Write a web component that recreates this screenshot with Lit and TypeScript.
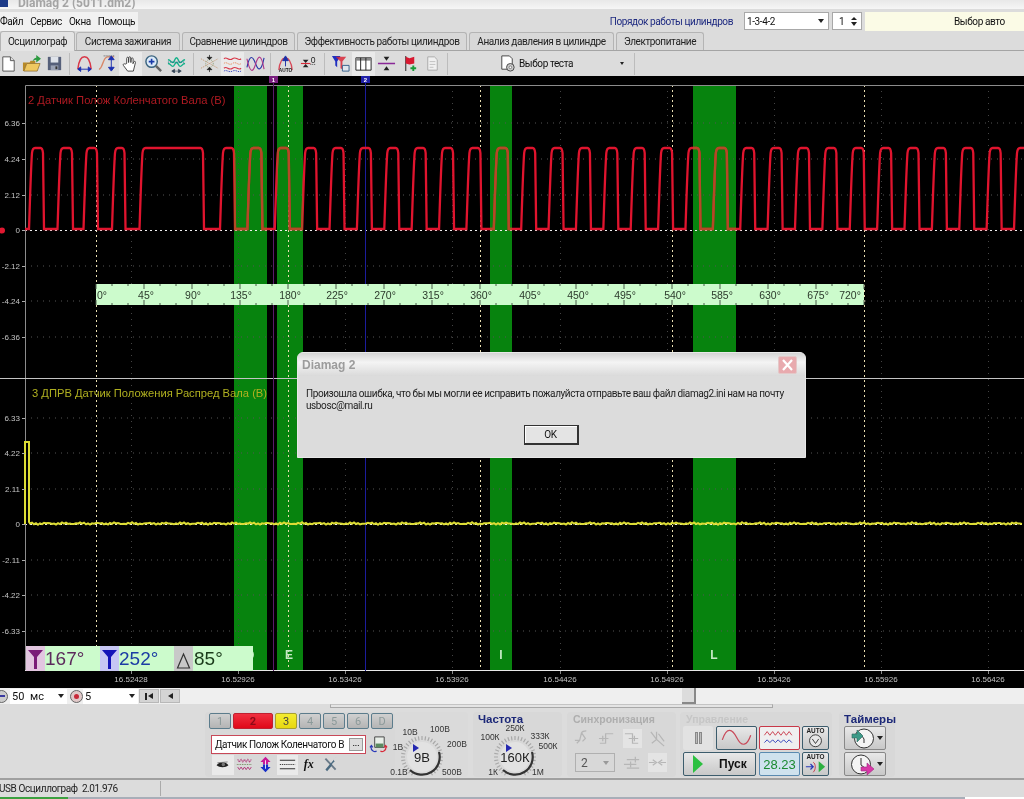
import { LitElement, html, css, svg } from 'lit'
import { customElement } from 'lit/decorators.js'

// --- plot data ---
const bands = [[234, 33], [277, 26], [490, 22], [693, 43]]
const bandLetters = [['D', 250], ['E', 289], ['I', 501], ['L', 714]]
const majorX = [96.5, 288.5, 480.5, 672.5, 864.5]
const minorX = [131, 238, 345, 452, 560, 667, 774, 881, 988]
const times = ['16.52428', '16.52926', '16.53426', '16.53926', '16.54426', '16.54926', '16.55426', '16.55926', '16.56426']
const ticks1 = [['6.36', 123], ['4.24', 159], ['2.12', 195], ['0', 230], ['-2.12', 266], ['-4.24', 301], ['-6.36', 337]]
const ticks2 = [['6.33', 418], ['4.22', 453], ['2.11', 489], ['0', 524], ['-2.11', 560], ['-4.22', 595], ['-6.33', 631]]
const degrees = [
  ['0°', 102], ['45°', 146], ['90°', 193], ['135°', 241], ['180°', 290], ['225°', 337], ['270°', 385], ['315°', 433], ['360°', 481],
  ['405°', 530], ['450°', 578], ['495°', 625], ['540°', 675], ['585°', 722], ['630°', 770], ['675°', 818], ['720°', 850]
]

function redTrace () {
  const pulses: number[][] = [[29, 44], [57.5, 73], [83.5, 98], [112, 125.5], [139.5, 204]]
  for (let k = 0; k < 30; k++) {
    const r = 220 + 27.38 * k
    pulses.push([r, r + 15])
  }
  let d = 'M25 229'
  for (const [r, f] of pulses) {
    d += `L${r} 229C${r + 1} 200 ${r + 2} 165 ${r + 3} 153Q${r + 3.5} 148 ${r + 6} 148L${f - 3.5} 148Q${f - 1.5} 148 ${f - 1} 153L${f} 229`
  }
  return d
}

function yellowTrace () {
  let d = 'M25 524L25 442L29 442L29 522'
  for (let x = 30; x < 1024; x += 2) {
    const n = Math.sin(x * 1.7) * 0.7 + Math.sin(x * 0.37) * 0.5
    d += `L${x} ${(523.5 + n).toFixed(1)}`
  }
  return d
}

function rulerTicks () {
  let d = ''
  for (let x = 96; x <= 864; x += 16) {
    const major = (x - 96) % 48 === 0
    d += `M${x} 284v${major ? 5 : 2}M${x} 305v-${major ? 5 : 2}`
  }
  return d
}

// --- toolbar icons ---
const ic = (body: unknown, cls = '') => html`<svg class="ic ${cls}" viewBox="0 0 20 20">${body}</svg>`

const icons = {
  page: svg`<path d="M4 3h8l4 4v11H4z" fill="#fff" stroke="#555"/><path d="M12 3v4h4" fill="#ddd" stroke="#555"/>`,
  open: svg`<path d="M1 9h7l1-2h5v3H5L2 18H1z" fill="#b88a28"/><path d="M5 10h14l-3 8H2z" fill="#f0c860" stroke="#86601c" stroke-width=".7"/><path d="M11 8c1-3 3-4 4-4V1l5 4-5 4V6c-2 0-3 1-4 2z" fill="#2c9a40"/>`,
  save: svg`<path d="M3 3h14v14H3z" fill="#56607a"/><path d="M6 3h8v6H6z" fill="#dfe3ea"/><path d="M6 12h8v5H6z" fill="#9aa2b4"/><path d="M11 13h2v3h-2z" fill="#333"/>`,
  arch: svg`<path d="M3 16C4 6 7 3 10 3s6 3 7 13" fill="none" stroke="#d83848" stroke-width="1.6"/><path d="M3 16h14M3 16l3-2.4v4.8zM17 16l-3-2.4v4.8z" fill="#1c30b0" stroke="#1c30b0"/>`,
  curve: svg`<path d="M1 16c4 0 4-13 9-13h7" fill="none" stroke="#d88868" stroke-width="1.5"/><path d="M6 2h12" stroke="#555" stroke-dasharray="1 1"/><path d="M14 4v12M14 2l-3 4h6zM14 18l-3-4h6z" fill="#1c30b0" stroke="#1c30b0"/>`,
  hand: svg`<path d="M6 10V4.5c0-1.5 2-1.5 2 0V9l.2-5c0-1.5 2-1.5 2 0l.2 5 .4-4c.2-1.3 2-1.2 2 .2l-.2 5 1-2c.6-1 2-.4 1.6.8L13 18H7L2.5 12c-.8-1.2.8-2.4 1.8-1.3z" fill="#fff" stroke="#333" stroke-width=".9"/>`,
  zoom: svg`<circle cx="8" cy="8" r="6" fill="#dceaf8" stroke="#38627e" stroke-width="1.5"/><path d="M5 8h6M8 5v6" stroke="#1a3aa8" stroke-width="1.7"/><path d="M12.5 12.5L18 18" stroke="#666" stroke-width="2.6"/>`,
  teal: svg`<path d="M1 6c3 0 3 3 5 3s2-5 4-5 2 5 4 5 2-3 5-3" fill="none" stroke="#10b088" stroke-width="1.5"/><path d="M1 10c3 0 3 3 5 3s2-4 4-4 2 4 4 4 2-3 5-3" fill="none" stroke="#10b088" stroke-width="1.5"/><path d="M1 8.5h18" stroke="#206080" stroke-dasharray="1 1"/><path d="M6 18h8M5 18l3-2v4zM15 18l-3-2v4z" fill="#345" stroke="#345" stroke-width=".7"/>`,
  cross: svg`<path d="M1 5l18 10M1 15l18-10" stroke="#c8a080" stroke-dasharray="1.5 1"/><circle cx="10" cy="10" r="4" fill="none" stroke="#8a9a70" stroke-dasharray="1 1"/><path d="M10 1v4M7.5 3.5L10 6l2.5-2.5zM10 19v-4M7.5 16.5L10 14l2.5 2.5z" stroke="#222" fill="#222" stroke-width=".8"/>`,
  waves: svg`<path d="M1 5c3-3 5 3 9 0s6 3 9 0" fill="none" stroke="#d83848" stroke-width="1.2"/><path d="M1 10c3-3 5 3 9 0s6 3 9 0" fill="none" stroke="#e88858" stroke-dasharray="1.5 1"/><path d="M1 15c3-3 5 3 9 0s6 3 9 0" fill="none" stroke="#d83848" stroke-width="1.2"/><path d="M1 18c3-2 5 2 9 0s6 2 9 0" fill="none" stroke="#3848c0" stroke-dasharray="1.5 1"/>`,
  mix: svg`<path d="M1 14C4 0 7 2 10 10s6 9 9-6" fill="none" stroke="#2838a8" stroke-width="1.2"/><path d="M1 5c3 14 6 16 9 6s6-12 9 5" fill="none" stroke="#b03888" stroke-width="1.2"/>`,
  autoArch: svg`<path d="M3 17C4 7 7 4 10 4s6 3 7 13" fill="none" stroke="#d84858" stroke-width="1.4"/><path d="M10 13V5M7 7l3-5 3 5z" fill="#1c30a8" stroke="#1c30a8"/><text x="10" y="19" class="micro" text-anchor="middle">AUTO</text>`,
  zero: svg`<path d="M2 10h10" stroke="#d82838" stroke-width="1.2"/><path d="M4 6h6l-3 3.4zM4 14h6l-3-3.4z" fill="#222"/><text x="15" y="9" class="small" text-anchor="middle">0</text><path d="M12 11h6" stroke="#444" stroke-dasharray="1 1"/>`,
  funnel: svg`<path d="M1 2h9L6.5 8v6L4.5 12V8z" fill="#2030c0"/><path d="M5 3h11l-4 5v8l-2-1V8z" fill="#d82838" opacity=".85"/><path d="M12 12h7v6h-7z" fill="#dfe6ee" stroke="#35608a"/>`,
  table: svg`<path d="M2 4h16v13H2z" fill="#fff" stroke="#222"/><path d="M2 4h16v3H2z" fill="#888"/><path d="M7 4v13M12.5 4v13" stroke="#222"/>`,
  divide: svg`<path d="M1 10h18" stroke="#8a2898" stroke-width="1.6"/><path d="M7 3h6l-3 4zM7 17h6l-3-4z" fill="#222"/>`,
  flag: svg`<path d="M6 2v16" stroke="#555" stroke-width="1.4"/><path d="M6 3l4 1.5L15 3v7l-5 1-4-1z" fill="#d81830"/><path d="M14 12v6M11 15h6" stroke="#189a38" stroke-width="2"/>`,
  faint: svg`<path d="M5 3h7l3 3v11H5z" fill="#f0f0f0" stroke="#aaa"/><path d="M7 8h6M7 11h6M7 14h4" stroke="#c0c0c0"/>`,
  gearPage: svg`<path d="M4 2h8l3 3v11H4z" fill="#fff" stroke="#444"/><circle cx="13" cy="14" r="4" fill="#ccc" stroke="#444"/><circle cx="13" cy="14" r="1.4" fill="#fff" stroke="#444" stroke-width=".6"/>`,
  channelSwap: svg`<path d="M6 2h10v11H6z" fill="#e8eee8" stroke="#444"/><path d="M7 9h8v4H7z" fill="#5a8a60"/><path d="M2 12c0 5 4 6 6 5M1 13l1.5-2 1.5 2" fill="none" stroke="#2838b8" stroke-width="1.3"/><path d="M18 12c0 5-4 6-6 5M19 13l-1.5-2-1.5 2" fill="none" stroke="#d82838" stroke-width="1.3"/>`,
  eye: svg`<path d="M3 11c3-5 11-5 14 0-3 3-11 3-14 0z" fill="#222"/><circle cx="11" cy="10" r="2" fill="#777"/><path d="M4 8l12-1" stroke="#777"/>`,
  wave: svg`<path d="M2 4l2 3 2-3 2 3 2-3 2 3 2-3 2 3 2-3" fill="none" stroke="#b03878" stroke-dasharray="1.5 .6" stroke-width="1.2"/><path d="M1 10h18" stroke="#5a7a40" stroke-dasharray="1 1"/><path d="M2 13l2 3 2-3 2 3 2-3 2 3 2-3 2 3 2-3" fill="none" stroke="#b03878" stroke-width="1.1"/>`,
  updown: svg`<path d="M10 1l6 6h-3v3H7V7H4z" fill="#c81898"/><path d="M10 19l6-6h-3v-3H7v3H4z" fill="#1830c8"/><path d="M10 5v10" stroke="#fff"/>`,
  lines: svg`<path d="M1 5h18M1 15h18" stroke="#222" stroke-width="1.1"/><path d="M1 10h18" stroke="#222" stroke-dasharray="1.5 1"/>`,
  tools: svg`<path d="M4 3l12 13" stroke="#6a7a88" stroke-width="2.2"/><path d="M16 2l-5 6-2 2-5 6 2 2 5-6 1-3 5-5z" fill="#4a6a80"/><circle cx="16" cy="4" r="2.2" fill="#d8d8d8"/>`
}

function disabledIcon (d: string) {
  return html`<svg class="ic" viewBox="0 0 20 20"><path d=${d} fill="none" stroke="#b6b6b6" stroke-width="1.3"/></svg>`
}

// knob drawn on its own little canvas; labels are real text
function knob (w: number, h: number, cx: number, cy: number, value: string, labels: [string, number, number][]) {
  const minor: string[] = []
  for (let a = 120; a <= 420; a += 10) {
    const rad = a * Math.PI / 180
    const c = Math.cos(rad)
    const s = Math.sin(rad)
    minor.push(`M${(cx + c * 17).toFixed(1)} ${(cy + s * 17).toFixed(1)}L${(cx + c * 21).toFixed(1)} ${(cy + s * 21).toFixed(1)}`)
  }
  return html`<svg class="knob" width=${w} height=${h} viewBox="0 0 ${w} ${h}">
    <path d=${minor.join('')} stroke="#a8a8a8" stroke-width="1.2"/>
    <circle cx=${cx} cy=${cy} r="15" fill="#e2e2e2"/>
    <path d="M${cx - 12} ${cy + 13}A17.700 17.700 0 0 0 ${cx + 17} ${cy - 5}" fill="none" stroke="#333" stroke-width="2.2"/>
    <path d="M${cx - 9} ${cy - 13}l6 4-6 4z" fill="#2428b0"/>
    <text x=${cx} y=${cy + 5} class="knob-val">${value}</text>
    ${labels.map(([t, x, y]) => svg`<text x=${x} y=${y} class="knob-lab">${t}</text>`)}
  </svg>`
}

const tabs = [
  ['Осциллограф', 'active t1'], ['Система зажигания', 't2'], ['Сравнение цилиндров', 't3'],
  ['Эффективность работы цилиндров', 't4'], ['Анализ давления в цилиндре', 't5'], ['Электропитание', 't6']
]

const channels = [
  ['1', 'w1'], ['2', 'w2 red'], ['3', 'w1 yellow'], ['4', 'w1'], ['5', 'w1'], ['6', 'w1'], ['D', 'w1']
]

@customElement('app-root')
export class AppRoot extends LitElement {
  static styles = css`
    * { box-sizing: border-box; }

    :host {
      display: block;
      width: 1024px;
      height: 799px;
      overflow: hidden;
      background: #dcdcdc;
      color: #111;
      font-family: Roboto, "Liberation Sans", sans-serif;
      font-size: 10px;
      filter: blur(.35px);
    }

    /* the reference's interface text is narrow for its height */
    .menu, .order, .combo, .pick, .tab, .test, .d-body, .name, .status span, .ok { letter-spacing: -.4px; }

    .title {
      display: flex;
      align-items: flex-end;
      height: 9px;
      overflow: hidden;
      background: linear-gradient(#e8e8e8, #f6f6f6);
      padding-left: 18px;
      position: relative;
    }
    .title span { font-size: 12px; font-weight: bold; color: #a4a4a4; line-height: 13px; margin-bottom: -1px; flex: none; }
    .title i { position: absolute; left: 0; top: 0; width: 8px; height: 7px; background: #1c3a88; }

    .menu-row {
      display: flex;
      align-items: center;
      height: 23px;
      padding-top: 1px;
    }
    .menu {
      display: flex;
      gap: 7px;
      width: 138px;
      height: 19px;
      align-items: center;
      background: #f1f1f1;
      white-space: nowrap;
    }
    .menu-row .order { margin-left: auto; color: #1e2a80; margin-right: 11px; }
    .combo {
      display: flex;
      align-items: center;
      justify-content: space-between;
      height: 18px;
      padding: 0 4px 0 2px;
      background: #fff;
      border: 1px solid #a8a8a8;
    }
    .arrow { width: 0; height: 0; border: 3px solid transparent; border-top: 4px solid #222; border-bottom: 0; }
    .order-sel { width: 85px; margin-right: 3px; }
    .spin { width: 30px; margin-right: 3px; padding-left: 6px; }
    .spin em { display: flex; flex-direction: column; gap: 2px; }
    .up { width: 0; height: 0; border: 3px solid transparent; border-bottom: 3px solid #222; border-top: 0; }
    .pick {
      width: 159px;
      height: 19px;
      background: #fbfbe6;
      display: flex;
      align-items: center;
      padding-left: 89px;
      white-space: nowrap;
    }

    .tabs {
      display: flex;
      align-items: flex-end;
      gap: 2px;
      height: 19px;
      border-bottom: 1px solid #a4a4a4;
    }
    .tab {
      height: 18px;
      display: flex;
      align-items: center;
      justify-content: center;
      border: 1px solid #b4b4b4;
      border-bottom: 0;
      border-radius: 3px 3px 0 0;
      background: #d8d8d8;
      white-space: nowrap;
      color: #222;
    }
    .tab.active { height: 20px; margin-bottom: -1px; background: #e4e4e4; margin-right: -1px; }
    .t1 { width: 75px; }
    .t2 { width: 104px; }
    .t3 { width: 113px; }
    .t4 { width: 170px; }
    .t5 { width: 145px; }
    .t6 { width: 88px; }

    .toolbar {
      display: flex;
      align-items: center;
      height: 25px;
      margin-left: -3px;
    }
    .tb { width: 23px; height: 24px; display: flex; align-items: center; justify-content: center; flex: none; }
    .tb.on { background: #eaeaea; }
    .ic { width: 19px; height: 19px; display: block; }
    .sep { display: flex; justify-content: center; flex: none; height: 22px; }
    .sep::after { content: ''; width: 1px; background: #bcbcbc; }
    .s6 { width: 7px; }
    .s9 { width: 9px; }
    .s10 { width: 10px; }
    .micro { font-size: 5px; font-weight: bold; fill: #222; font-family: "Liberation Sans", sans-serif; }
    .small { font-size: 9px; fill: #222; font-family: "Liberation Sans", sans-serif; }
    .test {
      display: flex;
      align-items: center;
      gap: 2px;
      width: 133px;
      margin-left: 47px;
      white-space: nowrap;
    }
    .test .arrow { margin-left: auto; margin-right: 7px; border-width: 2px; border-top-width: 3px; }

    .plot { position: relative; height: 612px; background: #000; }
    .plot > svg { display: block; }
    .plot text { font-family: "Liberation Sans", sans-serif; }
    .t-tick { font-size: 8px; fill: #c4c4c4; }
    .deg { font-size: 10.5px; fill: #2c3a2c; }
    .ch1 { font-size: 11.2px; fill: #b01a22; }
    .ch2 { font-size: 11.2px; fill: #b0b020; }
    .letter { font-size: 12px; font-weight: bold; fill: #c4eac4; text-anchor: middle; }
    .badge { font-size: 6px; font-weight: bold; fill: #fff; text-anchor: middle; }

    .angles {
      position: absolute;
      left: 26px;
      top: 570px;
      width: 227px;
      height: 25px;
      display: flex;
      background: #ccfbcc;
      font-family: "Liberation Sans", sans-serif;
      font-size: 19px;
      line-height: 25px;
    }
    .angles .mark { width: 19px; height: 25px; display: flex; align-items: center; justify-content: center; flex: none; }
    .angles span { display: block; flex: none; }
    .m1 { background: #e2c6e0; }
    .m2 { background: #c6c6f4; margin-left: 17px; }
    .m3 { background: #c8c8c8; margin-left: 17px; }
    .v1 { color: #5c2a5c; width: 38px; }
    .v2 { color: #1c3ca4; width: 38px; }
    .v3 { color: #1a3a1a; padding-left: 1px; }

    .dialog {
      position: absolute;
      left: 297px;
      top: 276px;
      width: 509px;
      height: 106px;
      background: #dcdcdc;
      border: 1px solid #e8e8e8;
      border-radius: 6px 6px 0 0;
      display: flex;
      flex-direction: column;
    }
    .d-head {
      height: 23px;
      flex: none;
      display: flex;
      align-items: center;
      justify-content: space-between;
      padding: 0 8px 0 4px;
      background: linear-gradient(#d4d4d4, #f4f4f4 40%, #dadada);
      border-radius: 6px 6px 0 0;
      font-family: "Liberation Sans", sans-serif;
      font-size: 12px;
      font-weight: bold;
      color: #9c9c9c;
    }
    .close {
      width: 19px;
      height: 18px;
      background: #e8aaae;
      border: 1px solid #e4c8c8;
      border-radius: 2px;
      display: flex;
    }
    .close svg { width: 100%; height: 100%; }
    .d-body { padding: 12px 8px 0; line-height: 12px; color: #222; white-space: nowrap; }
    .d-foot { display: flex; justify-content: center; margin-top: 13px; padding-right: 1px; }
    .ok {
      width: 55px;
      height: 20px;
      border: 1px solid #333;
      border-width: 1px 2px 2px 1px;
      background: #e4e4e4;
      display: flex;
      align-items: center;
      justify-content: center;
      box-shadow: inset 1px 1px 0 #fff;
    }

    .nav {
      display: flex;
      align-items: center;
      height: 16px;
      background: #efefef;
      position: relative;
    }
    .round { width: 13px; height: 13px; border-radius: 50%; border: 1px solid #666; background: #ccc; display: flex; align-items: center; justify-content: center; flex: none; }
    .round b { width: 7px; height: 2px; background: #3a3aa0; }
    .round.plus { margin-left: 3px; background: #e0c8c8; }
    .round.plus b { width: 5px; height: 5px; border-radius: 50%; background: #c82838; }
    .minus { margin-left: -5px; margin-right: 2px; }
    .nav-sel { display: flex; align-items: center; justify-content: space-between; height: 15px; background: #fff; padding: 0 3px 0 2px; font-size: 11px; }
    .w58 { width: 57px; word-spacing: 3px; }
    .w55 { width: 55px; }
    .step { height: 14px; width: 20px; background: #d4d4d4; border: 1px solid #b8b8b8; margin-left: 1px; display: flex; align-items: center; justify-content: center; gap: 1px; flex: none; }
    .step u { width: 2px; height: 7px; background: #222; }
    .step s { width: 0; height: 0; border: 3.5px solid transparent; border-right: 5px solid #222; border-left: 0; }
    .thumb { position: absolute; left: 682px; top: 0; width: 14px; height: 16px; background: #dcdcdc; border-right: 2px solid #888; border-bottom: 2px solid #888; }

    .hbar { height: 4px; margin: 0 251px 0 330px; background: #e4e4e4; border: 1px solid #a8a8a8; border-top: 1px solid #c4c4c4; }

    .panel {
      display: flex;
      height: 72px;
      padding: 4px 0 0 205px;
      gap: 5px;
      border-bottom: 2px solid #a0a0a0;
    }
    .grp { background: #d8d8d8; border-radius: 4px; height: 65px; flex: none; position: relative; }
    .g-ch { width: 190px; padding: 1px 0 0 4px; display: flex; flex-direction: column; }
    .g-kn { width: 73px; margin-left: -5px; background: #dadada; }
    .g-fr { width: 89px; }
    .g-sy { width: 109px; }
    .g-co { width: 152px; margin-left: -1px; }
    .g-ti { width: 56px; margin-left: 2px; }

    .ch-row { display: flex; gap: 2px; height: 16px; }
    .cb {
      height: 16px;
      display: flex;
      align-items: center;
      justify-content: center;
      border: 1px solid #5c7c8c;
      border-radius: 2px;
      background: linear-gradient(#d0d0d0, #b4b4b4);
      color: #8c9a9a;
      font-size: 11px;
    }
    .w1 { width: 22px; }
    .w2 { width: 40px; }
    .red { background: linear-gradient(#f03040, #e00818); border-color: #c02030; color: #8c0a18; font-weight: bold; }
    .yellow { background: linear-gradient(#f4ec30, #e8d810); border-color: #a8a030; color: #444; }
    .name-row { display: flex; align-items: center; gap: 3px; margin: 6px 0 0 2px; height: 19px; }
    .name {
      width: 155px;
      height: 19px;
      border: 1px solid #c84858;
      background: #fff;
      display: flex;
      align-items: center;
      justify-content: space-between;
      padding: 0 2px 0 3px;
      white-space: nowrap;
    }
    .dots { width: 14px; height: 13px; background: #dcdcdc; border: 1px solid #999; font-size: 8px; line-height: 9px; text-align: center; font-weight: bold; letter-spacing: 0; }
    .ch-tools { display: flex; align-items: center; height: 21px; margin-left: 3px; }
    .ch-tools .tb { width: 21.5px; height: 20px; }
    .ch-tools .ic { width: 17px; height: 17px; }
    .fx { font: italic bold 12px "Liberation Serif", serif; }

    .knob { display: block; overflow: visible; }
    .knob text { font-family: "Liberation Sans", sans-serif; }
    .knob-lab { font-size: 8.5px; fill: #333; text-anchor: middle; }
    .knob-val { font-size: 13px; fill: #222; text-anchor: middle; }

    .g-title { font-family: "Liberation Sans", sans-serif; font-weight: bold; font-size: 11.5px; line-height: 14px; padding-left: 5px; color: #1c2878; white-space: nowrap; }
    .g-title.off { color: #aeaeae; font-size: 10.5px; padding-left: 6px; }
    .g-title.fade { color: #c6c6c6; font-size: 10.5px; padding-left: 6px; }
    .sy-grid { display: grid; grid-template-columns: repeat(4, 25px); gap: 5px 0; padding: 3px 0 0 3px; justify-items: center; align-items: center; }
    .sy-sel { grid-column: span 2; justify-self: start; margin-left: 5px; width: 40px; height: 19px; border: 1px solid #b0b0b0; display: flex; align-items: center; justify-content: space-between; padding: 0 5px; color: #555; font-size: 12px; }
    .sy-sel .arrow { border-top-color: #999; }
    .lit { background: #e4e4e4; }

    .co-grid { display: flex; flex-direction: column; gap: 2px; padding: 0 0 0 3px; margin-top: 0; }
    .co-row { display: flex; gap: 2px; height: 24px; }
    .btn {
      display: flex;
      align-items: center;
      justify-content: center;
      height: 24px;
      flex: none;
      border: 1px solid #3c5c6c;
      border-radius: 2px;
      background: linear-gradient(#e8e8e8, #c8c8c8);
    }
    .pause { width: 30px; border: 0; background: #e2e2e2; gap: 1px; margin-right: 1px; }
    .pause b { width: 3px; height: 12px; border: 1px solid #888; background: #bbb; }
    .b41 { width: 41px; }
    .b27 { width: 27px; }
    .b41.redline { border-color: #c83848; background: #efefef; }
    .start { width: 73px; gap: 0; justify-content: flex-start; padding-left: 8px; font-family: "Liberation Sans", sans-serif; font-weight: bold; font-size: 12px; margin-right: 1px; }
    .start svg { width: 12px; height: 18px; margin-right: 15px; }
    .readout { color: #1a8a30; font-family: "Liberation Sans", sans-serif; font-size: 13px; background: #cfe2ee; border-color: #5a8ab0; }
    .btn svg.big { width: 100%; height: 100%; }

    .t-btn { width: 42px; height: 24px; margin: 0 0 2px 5px; gap: 2px; border-color: #888; padding-left: 2px; }
    .t-btn svg { width: 25px; height: 21px; }
    .t-btn .arrow { border-width: 3px; border-top-width: 4px; }
    .g-ti .g-title { padding-left: 5px; margin-bottom: 0; }

    .status {
      height: 17px;
      display: flex;
      align-items: center;
      white-space: nowrap;
      color: #222;
    }
    .status span { width: 162px; flex: none; border-right: 1px solid #aaa; height: 15px; line-height: 15px; margin-left: -1px; }
    .foot { display: flex; height: 2px; background: #a8aeb8; position: relative; }
    .foot i { width: 68px; background: #3ca040; }
    .foot b { margin-left: auto; width: 59px; background: #fff; }
  `

  plot () {
    const trace = redTrace()
    return html`<svg width="1024" height="612" viewBox="0 76 1024 612">
      <defs>
        <clipPath id="on-band">${bands.map(([x, w]) => svg`<rect x=${x} y="85" width=${w} height="586"/>`)}</clipPath>
      </defs>
      ${bands.map(([x, w]) => svg`<rect x=${x} y="85" width=${w} height="586" fill="#07830e"/>`)}

      <!-- grid -->
      ${[...ticks1, ...ticks2].filter(t => t[0] !== '0').map(t => svg`<path d="M25 ${t[1]}H1024" stroke="#555" stroke-dasharray="1 5"/>`)}
      ${minorX.map(x => svg`<path d="M${x}.5 85V671" stroke="#444" stroke-dasharray="1 5"/>`)}
      ${majorX.map(x => svg`<path d="M${x} 85V671" stroke="#e8dcb0" stroke-dasharray="2 3"/>`)}
      <path d="M25 230.5H1024M25 524.5H1024" stroke="#f0f0f0" stroke-dasharray="2 3"/>

      <!-- frame -->
      <path d="M25.5 671V85.5H1024" fill="none" stroke="#8c8c8c"/>
      <path d="M0 378.5H1024" stroke="#c4c4c4"/>
      <path d="M25 670.5H1024" stroke="#e8e8e8"/>

      <!-- cursors -->
      <path d="M273.5 82V671" stroke="#5a1c6a"/>
      <path d="M365.5 82V671" stroke="#1c1c9c"/>
      <rect x="269" y="76" width="9" height="7" fill="#7a2080"/>
      <text x="273.5" y="82" class="badge">1</text>
      <rect x="361" y="76" width="9" height="7" fill="#2020a8"/>
      <text x="365.5" y="82" class="badge">2</text>

      <!-- traces -->
      <path d=${trace} fill="none" stroke="#e0142e" stroke-width="2.3"/>
      <path d=${trace} fill="none" stroke="#b44a26" stroke-width="2.3" clip-path="url(#on-band)"/>
      <path d=${yellowTrace()} fill="none" stroke="#dcdc34" stroke-width="2"/>

      <text x="28" y="104" class="ch1">2 Датчик Полож Коленчатого Вала (В)</text>
      <text x="32" y="397" class="ch2">3 ДПРВ Датчик Положения Распред Вала (В)</text>

      ${bandLetters.map(([t, x]) => svg`<text x=${x} y="659" class="letter">${t}</text>`)}

      <!-- value scales -->
      ${[...ticks1, ...ticks2].map(t => svg`
        <text x="20" y=${Number(t[1]) + 3} class="t-tick" text-anchor="end">${t[0]}</text>
        <path d="M22 ${t[1]}.5H25" stroke="#aaa"/>`)}
      <circle cx="2" cy="230.5" r="3" fill="#e01830"/>

      <!-- time scale -->
      ${times.map((t, i) => svg`
        <path d="M${minorX[i]}.5 671v3" stroke="#888"/>
        <text x=${minorX[i]} y="682" class="t-tick" text-anchor="middle">${t}</text>`)}

      <!-- degree ruler -->
      <rect x="96" y="284" width="768" height="21" fill="#ccfbcc"/>
      <path d=${rulerTicks()} stroke="#4a5a4a"/>
      ${degrees.map(([t, x]) => svg`<text x=${x} y="299" class="deg" text-anchor="middle">${t}</text>`)}
    </svg>`
  }

  angles () {
    return html`<div class="angles">
      <div class="mark m1"><svg width="15" height="22" viewBox="0 0 15 22"><path d="M0 2h15L9 9v12H6V9z" fill="#7a1c78"/></svg></div>
      <span class="v1">167°</span>
      <div class="mark m2"><svg width="15" height="22" viewBox="0 0 15 22"><path d="M0 2h15L9 9v12H6V9z" fill="#1414b8"/></svg></div>
      <span class="v2">252°</span>
      <div class="mark m3"><svg width="15" height="22" viewBox="0 0 15 22"><path d="M1.5 20L7.5 6l6 14z" fill="none" stroke="#333" stroke-width="1.2"/></svg></div>
      <span class="v3">85°</span>
    </div>`
  }

  dialog () {
    return html`<div class="dialog">
      <div class="d-head">
        <span>Diamag 2</span>
        <div class="close"><svg viewBox="0 0 17 16"><path d="M4 3l9 10M13 3L4 13" stroke="#fff" stroke-width="2.2"/></svg></div>
      </div>
      <div class="d-body">Произошла ошибка, что бы мы могли ее исправить пожалуйста отправьте ваш файл diamag2.ini нам на почту<br>usbosc@mail.ru</div>
      <div class="d-foot"><div class="ok">OK</div></div>
    </div>`
  }

  channelGroup () {
    return html`<div class="grp g-ch">
      <div class="ch-row">${channels.map(([t, c]) => html`<div class="cb ${c}">${t}</div>`)}</div>
      <div class="name-row">
        <div class="name">Датчик Полож Коленчатого В<div class="dots">...</div></div>
        ${ic(icons.channelSwap)}
      </div>
      <div class="ch-tools">
        <div class="tb on">${ic(icons.eye)}</div>
        <div class="tb">${ic(icons.wave)}</div>
        <div class="tb">${ic(icons.updown)}</div>
        <div class="tb on">${ic(icons.lines)}</div>
        <div class="tb fx">fx</div>
        <div class="tb">${ic(icons.tools)}</div>
      </div>
    </div>`
  }

  syncGroup () {
    return html`<div class="grp g-sy">
      <div class="g-title off">Синхронизация</div>
      <div class="sy-grid">
        <div>${disabledIcon('M2 12h5M4 15l3-3 2-8q1-2 5-2M9 4l4 6-3 3')}</div>
        <div>${disabledIcon('M2 15h6V5h8M1 10h10M5 7v6')}</div>
        <div class="lit">${disabledIcon('M2 5h8v10h6M6 10h10M12 7v6')}</div>
        <div>${disabledIcon('M3 3l6 8 8 7M9 3v8l-5 4M11 5l6 8')}</div>
        <div class="sy-sel">2<i class="arrow"></i></div>
        <div>${disabledIcon('M4 7h13M1 12h13M4 16h13M13 4v6M8 9v6')}</div>
        <div class="lit">${disabledIcon('M1 10h6M19 10h-6M5 7l4 3-4 3M15 7l-4 3 4 3')}</div>
      </div>
    </div>`
  }

  controlGroup () {
    return html`<div class="grp g-co">
      <div class="g-title fade">Управление</div>
      <div class="co-grid">
        <div class="co-row">
          <div class="btn pause"><b></b><b></b></div>
          <div class="btn b41"><svg class="big" viewBox="0 0 41 24"><path d="M5 14C10-1 16 2 21 12s11 9 15-3" fill="none" stroke="#c84858" stroke-width="1.3"/></svg></div>
          <div class="btn b41 redline"><svg class="big" viewBox="0 0 41 24"><path d="M4 9l3-4 3 4 3-4 3 4 3-4 3 4 3-4 3 4 3-4 3 4" fill="none" stroke="#c83848"/><path d="M4 17l3-3 3 3 3-3 3 3 3-3 3 3 3-3 3 3 3-3 3 3" fill="none" stroke="#2838b8"/></svg></div>
          <div class="btn b27"><svg class="big" viewBox="0 0 27 24"><text x="13.5" y="7" class="small" text-anchor="middle" style="font-size:7px;font-weight:bold">AUTO</text><circle cx="13.5" cy="15" r="6.5" fill="#e8e8e8" stroke="#333"/><path d="M10 13l3.5 5 3.5-5" fill="none" stroke="#333"/></svg></div>
        </div>
        <div class="co-row">
          <div class="btn start"><svg viewBox="0 0 12 18"><path d="M1 0l10 9-10 9z" fill="#2cc040"/></svg>Пуск</div>
          <div class="btn b41 readout">28.23</div>
          <div class="btn b27"><svg class="big" viewBox="0 0 27 24"><text x="13.5" y="7" class="small" text-anchor="middle" style="font-size:7px;font-weight:bold">AUTO</text><path d="M17 9l7 6-7 6z" fill="#2cb040"/><path d="M3 15h8M8 12l3 3-3 3" fill="none" stroke="#2838b8" stroke-width="1.3"/><path d="M11 10c3 2 3 8 0 11" fill="none" stroke="#c83848"/></svg></div>
        </div>
      </div>
    </div>`
  }

  timerGroup () {
    return html`<div class="grp g-ti">
      <div class="g-title">Таймеры</div>
      <div class="btn t-btn"><svg viewBox="0 0 25 21"><circle cx="14" cy="10.5" r="9.5" fill="#f4f4f4" stroke="#333"/><path d="M14 11L10 5M14 11v4" stroke="#333"/><path d="M2 6h5V2l6 6-6 6v-4H2z" fill="#3c9a88" stroke="#2c6a60" stroke-width=".6"/></svg><i class="arrow"></i></div>
      <div class="btn t-btn"><svg viewBox="0 0 25 21"><circle cx="11" cy="10.5" r="9.5" fill="#f4f4f4" stroke="#333"/><path d="M11 11V4M11 11l4 3" stroke="#333"/><path d="M11 13h6V9l7 6-7 6v-4h-6z" fill="#d838a8" stroke="#a02880" stroke-width=".6"/></svg><i class="arrow"></i></div>
    </div>`
  }

  render () {
    return html`
      <div class="title"><i></i><span>Diamag 2 (5011.dm2)</span></div>
      <div class="menu-row">
        <div class="menu"><span>Файл</span><span>Сервис</span><span>Окна</span><span>Помощь</span></div>
        <span class="order">Порядок работы цилиндров</span>
        <div class="combo order-sel">1-3-4-2<i class="arrow"></i></div>
        <div class="combo spin">1<em><i class="up"></i><i class="arrow"></i></em></div>
        <div class="pick">Выбор авто</div>
      </div>
      <div class="tabs">${tabs.map(([t, c]) => html`<div class="tab ${c}">${t}</div>`)}</div>
      <div class="toolbar">
        <div class="tb">${ic(icons.page)}</div>
        <div class="tb">${ic(icons.open)}</div>
        <div class="tb">${ic(icons.save)}</div>
        <div class="sep s6"></div>
        <div class="tb">${ic(icons.arch)}</div>
        <div class="tb">${ic(icons.curve)}</div>
        <div class="tb on">${ic(icons.hand)}</div>
        <div class="tb">${ic(icons.zoom)}</div>
        <div class="tb">${ic(icons.teal)}</div>
        <div class="sep s10"></div>
        <div class="tb">${ic(icons.cross)}</div>
        <div class="tb on">${ic(icons.waves)}</div>
        <div class="tb">${ic(icons.mix)}</div>
        <div class="sep s6"></div>
        <div class="tb">${ic(icons.autoArch)}</div>
        <div class="tb">${ic(icons.zero)}</div>
        <div class="sep s9"></div>
        <div class="tb">${ic(icons.funnel)}</div>
        <div class="tb on">${ic(icons.table)}</div>
        <div class="tb">${ic(icons.divide)}</div>
        <div class="tb">${ic(icons.flag)}</div>
        <div class="tb">${ic(icons.faint)}</div>
        <div class="sep s6"></div>
        <div class="test">${ic(icons.gearPage)}<span>Выбор теста</span><i class="arrow"></i></div>
        <div class="sep s6"></div>
      </div>

      <div class="plot">
        ${this.plot()}
        ${this.angles()}
        ${this.dialog()}
      </div>

      <div class="nav">
        <div class="round minus"><b></b></div>
        <div class="nav-sel w58">50 мс<i class="arrow"></i></div>
        <div class="round plus"><b></b></div>
        <div class="nav-sel w55">5<i class="arrow"></i></div>
        <div class="step"><u></u><s></s></div>
        <div class="step"><s></s></div>
        <div class="thumb"></div>
      </div>
      <div class="hbar"></div>

      <div class="panel">
        ${this.channelGroup()}
        <div class="grp g-kn">
          ${knob(73, 62, 27, 45, '9В', [['10В', 15, 23], ['100В', 45, 20], ['200В', 62, 35], ['1В', 3, 38], ['0.1В', 4, 63], ['500В', 57, 63]])}
        </div>
        <div class="grp g-fr">
          <div class="g-title">Частота</div>
          ${knob(89, 50, 42, 31, '160К', [['100К', 17, 14], ['250К', 42, 5], ['333К', 67, 13], ['500К', 75, 23], ['1К', 20, 49], ['1М', 65, 49]])}
        </div>
        ${this.syncGroup()}
        ${this.controlGroup()}
        ${this.timerGroup()}
      </div>

      <div class="status"><span>USB Осциллограф&nbsp;&nbsp;2.01.976</span></div>
      <div class="foot"><i></i><b></b></div>
    `
  }
}
